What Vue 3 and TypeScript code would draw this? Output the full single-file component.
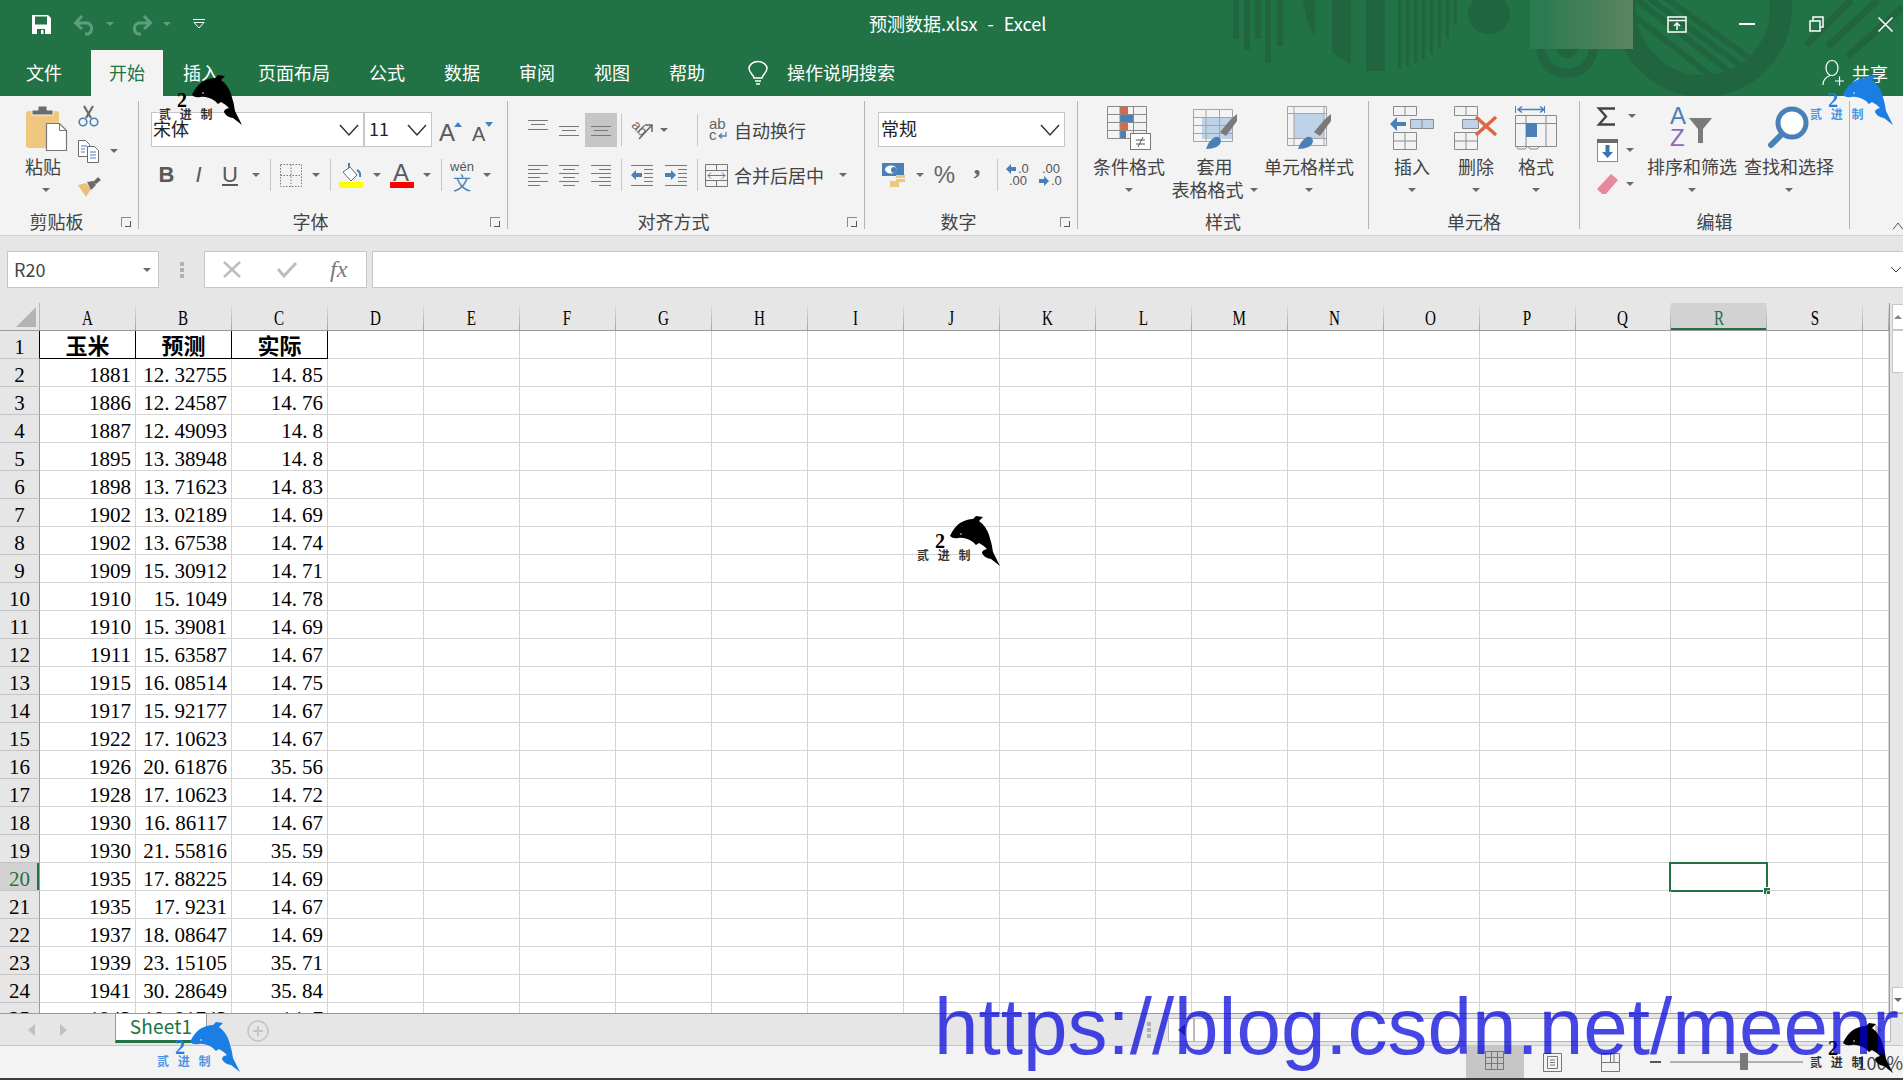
<script setup lang="ts">
interface Mark { x: number; y: number; color: string }

const BLUE = '#1b7ee5'
const marks: Mark[] = [
  { x: 917, y: 516, color: '#000' },
  { x: 159, y: 75, color: '#000' },
  { x: 1810, y: 75, color: BLUE },
  { x: 157, y: 1022, color: BLUE },
  { x: 1810, y: 1023, color: '#000' },
]

const tabs = ['页面布局', '公式', '数据', '审阅', '视图', '帮助']
const columns = 'ABCDEFGHIJKLMNOPQRS'.split('').concat('')

const data: [string, string, string][] = [
  ['1881', '12.32755', '14.85'], ['1886', '12.24587', '14.76'], ['1887', '12.49093', '14.8'],
  ['1895', '13.38948', '14.8'], ['1898', '13.71623', '14.83'], ['1902', '13.02189', '14.69'],
  ['1902', '13.67538', '14.74'], ['1909', '15.30912', '14.71'], ['1910', '15.1049', '14.78'],
  ['1910', '15.39081', '14.69'], ['1911', '15.63587', '14.67'], ['1915', '16.08514', '14.75'],
  ['1917', '15.92177', '14.67'], ['1922', '17.10623', '14.67'], ['1926', '20.61876', '35.56'],
  ['1928', '17.10623', '14.72'], ['1930', '16.86117', '14.67'], ['1930', '21.55816', '35.59'],
  ['1935', '17.88225', '14.69'], ['1935', '17.9231', '14.67'], ['1937', '18.08647', '14.69'],
  ['1939', '23.15105', '35.71'], ['1941', '30.28649', '35.84'], ['1943', '18.91743', '14.7'],
]

const heads = ['玉米', '预测', '实际']
const sheetRows = [heads as string[]].concat(data).map((vals, i) => ({
  n: i + 1,
  cells: columns.map((c, j) => {
    const [int, frac] = (vals[j] ?? '').split('.')
    return { c, int, frac, selected: c === 'R' && i === 19 }
  }),
}))

const bars = [
  [1233, 39], [1244, 50], [1255, 39], [1265, 63], [1277, 46],
  [1398, 69], [1406, 67], [1414, 63], [1422, 59], [1430, 54], [1438, 47], [1446, 38], [1454, 24],
]
</script>

<template>
  <div class="app">
    <div class="top">
      <!-- title bar artwork -->
      <svg class="decor" width="1903" height="96" viewBox="0 0 1903 96">
        <defs>
          <linearGradient id="patch" x1="0" x2="1" y1="0" y2="0">
            <stop offset="0.1" stop-color="#2c7a50" />
            <stop offset="1" stop-color="#5c8560" />
          </linearGradient>
          <clipPath id="ringin"><circle cx="1703" cy="8" r="67" /></clipPath>
        </defs>
        <g fill="#21653f">
          <rect v-for="b in bars" :key="b[0]" :x="b[0]" y="0" :width="b[0] < 1300 ? 6 : 3" :height="b[1]" />
          <path d="M1303 0h12v37q-9-15-12-37z" />
          <path d="M1332 0h19v65l-19-13z" />
          <path d="M1366 0h19v71h-19z" />
          <ellipse cx="1489" cy="14" rx="21" ry="20" />
          <circle cx="1567" cy="47" r="31" />
        </g>
        <circle cx="1567" cy="47" r="22" fill="#217346" />
        <circle cx="1567" cy="47" r="11" fill="#21653f" />
        <circle cx="1703" cy="8" r="78" fill="none" stroke="#21653f" stroke-width="22" />
        <g clip-path="url(#ringin)" stroke="#21653f" stroke-width="6">
          <path d="M1632 -4L1740 80M1622 6L1726 88M1646 -4L1752 74M1660 -6L1766 70" />
        </g>
        <path d="M1806 45L1851 0M1827 47L1878 0M1847 57L1903 7" stroke="#21653f" stroke-width="7" />
        <rect x="1530" y="0" width="103" height="49" fill="url(#patch)" />
      </svg>

      <div class="titlebar">
        <div class="qat">
          <svg class="q-save" width="19" height="19" viewBox="0 0 19 19">
            <path fill="#fff" d="M0 0h16l3 3v16H0z" />
            <path fill="#217346" d="M3 1.5h12v8H3zM5 14h8v5H5z" />
            <path fill="#fff" d="M9 15h2.5v4H9z" />
          </svg>
          <svg class="q-undo" width="23" height="21" viewBox="0 0 23 21" fill="none" stroke="#5f9d7b" stroke-width="3">
            <path d="M4 9h11a6 6 0 0 1 0 11h-3M9 2L2.500 9l6.500 6" />
          </svg>
          <i class="caret dim q-gap" />
          <svg class="q-redo" width="23" height="21" viewBox="0 0 23 21" fill="none" stroke="#5f9d7b" stroke-width="3">
            <path d="M19 9H8a6 6 0 0 0 0 11h3M14 2l6.500 7-6.500 6" />
          </svg>
          <i class="caret dim q-gap2" />
          <svg width="12" height="10" viewBox="0 0 12 10" fill="none" stroke="#fff">
            <path d="M0 .5h12M1 3.500l5 5.500 5-5.500z" />
          </svg>
        </div>
        <div class="doc-title">预测数据.xlsx&nbsp; - &nbsp;Excel</div>
        <div class="win">
          <svg width="20" height="17" viewBox="0 0 20 17" fill="none" stroke="#fff" stroke-width="1.500">
            <path d="M1 1h18v15H1zM1 4.500h18M10 14V7M7 10l3-3 3 3" />
          </svg>
          <svg class="w-min" width="16" height="2" viewBox="0 0 16 2"><path d="M0 0h16v2H0z" fill="#fff" /></svg>
          <svg class="w-max" width="15" height="16" viewBox="0 0 15 16" fill="none" stroke="#fff" stroke-width="1.500">
            <path d="M1 5h10v10H1zM4 5V1h10v10h-3" />
          </svg>
          <svg class="w-max" width="15" height="15" viewBox="0 0 15 15" fill="none" stroke="#fff" stroke-width="1.500">
            <path d="M.5.500l14 14M14.500.500l-14 14" />
          </svg>
        </div>
      </div>

      <nav class="tabs">
        <span class="tab first">文件</span>
        <span class="tab active">开始</span>
        <span class="tab">插入</span>
        <span v-for="t in tabs" :key="t" class="tab">{{ t }}</span>
        <svg class="bulb" width="20" height="24" viewBox="0 0 20 24" fill="none" stroke="#fff" stroke-width="1.500">
          <path d="M6 17c0-3-5-5-5-9.500a9 7 0 0 1 18 0C19 12 14 14 14 17zM7 20h6M8 23h4" />
        </svg>
        <span class="tell">操作说明搜索</span>
        <div class="share">
          <svg width="22" height="26" viewBox="0 0 22 26" fill="none" stroke="#fff" stroke-width="1.200">
            <ellipse cx="10" cy="8" rx="6" ry="7.500" />
            <path d="M1 25c0-5 3-8 7-9.500M13 21h9M17.500 16.500v9" />
          </svg>
          <span>共享</span>
        </div>
      </nav>
    </div>

    <section class="ribbon">
      <!-- clipboard -->
      <div class="group g-clip">
        <div class="gbody">
          <div class="big paste">
            <div class="big-ico">
              <svg width="41" height="45" viewBox="0 0 41 45">
                <rect x="0" y="5" width="33" height="37" rx="3" fill="#efc77f" />
                <path d="M6 9V4h6V0h9v4h6v5z" fill="#6b6b6b" stroke="#f3f3f3" />
                <path d="M20.500 17.500h13l7 7v20h-20z" fill="#fff" stroke="#777" stroke-width="1.200" />
                <path d="M33.500 17.500v7h7" fill="none" stroke="#777" />
              </svg>
            </div>
            <div class="big-txt">粘贴</div>
            <div class="big-txt"><i class="caret c-paste" /></div>
          </div>
          <div class="smalls s-clip">
            <div class="small-row">
              <svg width="21" height="21" viewBox="0 0 21 21" fill="none">
                <path d="M6 0l7 12M15 0L8 12" stroke="#6b6b6b" stroke-width="2.200" />
                <circle cx="5" cy="16" r="3.800" stroke="#4a80b8" stroke-width="1.600" />
                <circle cx="16" cy="16" r="3.800" stroke="#4a80b8" stroke-width="1.600" />
              </svg>
            </div>
            <div class="small-row">
              <svg width="21" height="23" viewBox="0 0 21 23" fill="#fff" stroke="#6b6b6b">
                <path d="M.5.500h7l4 4v12H.500z" />
                <path d="M9.500 6.500h7l4 4v12h-11z" />
                <path d="M3 6h6M3 9h4M3 12h4M12 12h6M12 15h6M12 18h6" stroke="#4a80b8" />
              </svg>
              <i class="caret c-copy" />
            </div>
            <div class="small-row">
              <svg width="24" height="21" viewBox="0 0 24 21">
                <path d="M0 9l8-2 5 6-5 8z" fill="#eac07d" />
                <path d="M9 6l6-1 3 4-5 5zM15 6l5-5 3 3-5 4z" fill="#6b6b6b" />
              </svg>
            </div>
          </div>
        </div>
        <div class="glabel"><span>剪贴板</span><i class="launcher" /></div>
      </div>

      <!-- font -->
      <div class="group g-font">
        <div class="gbody col">
          <div class="row1">
            <div class="select w-font"><span>宋体</span>
              <svg class="chev" width="20" height="12" viewBox="0 0 20 12" fill="none" stroke="#333" stroke-width="1.500"><path d="M1 1l9 10 9-10" /></svg>
            </div>
            <div class="select w-size"><span>11</span>
              <svg class="chev" width="20" height="12" viewBox="0 0 20 12" fill="none" stroke="#333" stroke-width="1.500"><path d="M1 1l9 10 9-10" /></svg>
            </div>
            <svg class="grow" width="24" height="28" viewBox="0 0 24 28">
              <text x="0" y="25" class="sz-a">A</text>
              <path d="M15 11l4-5 4 5z" fill="#4a80b8" />
            </svg>
            <svg class="shrink" width="22" height="28" viewBox="0 0 22 28">
              <text x="0" y="25" class="sz-b">A</text>
              <path d="M13 6h8l-4 5z" fill="#4a80b8" />
            </svg>
          </div>
          <div class="row2 r-font">
            <b class="t-b">B</b>
            <i class="t-i">I</i>
            <u class="t-u">U</u>
            <i class="caret" />
            <i class="sep" />
            <svg width="22" height="23" viewBox="0 0 22 23" fill="none" stroke="#777" stroke-dasharray="1.500 1.500">
              <path d="M.5.500h21v22H.500zM11 .5v22M.5 11.500h21" />
            </svg>
            <i class="caret" />
            <i class="sep" />
            <svg width="24" height="26" viewBox="0 0 24 26">
              <path d="M4 10l7-5 7 8-6 6z" fill="#fff" stroke="#6b6b6b" />
              <path d="M10 6V1M18 8q4 2 3 7" fill="none" stroke="#4a80b8" stroke-width="2" />
              <rect y="20" width="24" height="6" fill="#ff0" />
            </svg>
            <i class="caret" />
            <svg width="24" height="26" viewBox="0 0 24 26">
              <text x="3" y="19" class="sz-c">A</text>
              <rect y="20" width="24" height="6" fill="#f00" />
            </svg>
            <i class="caret" />
            <i class="sep" />
            <div class="wen"><span>wén</span><em>文</em></div>
            <i class="caret" />
          </div>
        </div>
        <div class="glabel"><span>字体</span><i class="launcher" /></div>
      </div>

      <!-- alignment -->
      <div class="group g-align">
        <div class="gbody col">
          <div class="row2 r-a1">
            <svg width="20" height="30" viewBox="0 0 20 30" stroke="#777"><path d="M0 5.500h20M3 9.500h14M0 14.500h20" /></svg>
            <svg width="20" height="30" viewBox="0 0 20 30" stroke="#777"><path d="M0 11.500h20M3 15.500h14M0 20.500h20" /></svg>
            <div class="on"><svg width="20" height="30" viewBox="0 0 20 30" stroke="#777"><path d="M0 17.500h20M3 21.500h14M0 26.500h20" /></svg></div>
            <i class="sep" />
            <svg width="22" height="20" viewBox="0 0 22 20" fill="none" stroke="#666" stroke-width="1.500">
              <path d="M8 19L20 6M14 5h7v7" />
              <text x="0" y="11" class="ab45" transform="rotate(45 6 8)">ab</text>
            </svg>
            <i class="caret c-orient" />
            <i class="sep" />
            <div class="wide">
              <svg width="24" height="22" viewBox="0 0 24 22">
                <text x="4" y="10" class="ab">ab</text>
                <text x="4" y="21" class="ab">c</text>
                <path d="M21 13v4h-7M17 14.500L14 17l3 2.500" fill="none" stroke="#4a80b8" stroke-width="1.300" />
              </svg>
              <span>自动换行</span>
            </div>
          </div>
          <div class="row2 r-a2">
            <svg width="20" height="22" viewBox="0 0 20 22" stroke="#777"><path d="M0 1.500h20M0 5.500h12M0 9.500h20M0 13.500h12M0 17.500h20M0 21.500h12" /></svg>
            <svg width="20" height="22" viewBox="0 0 20 22" stroke="#777"><path d="M0 1.500h20M4 5.500h12M0 9.500h20M4 13.500h12M0 17.500h20M4 21.500h12" /></svg>
            <svg width="20" height="22" viewBox="0 0 20 22" stroke="#777"><path d="M0 1.500h20M8 5.500h12M0 9.500h20M8 13.500h12M0 17.500h20M8 21.500h12" /></svg>
            <i class="sep" />
            <svg width="22" height="22" viewBox="0 0 22 22">
              <path d="M0 1.500h22M13 5.500h9M13 9.500h9M13 13.500h9M13 17.500h9M0 21.500h22" stroke="#777" />
              <path d="M0 11l5-5v3h6v4H5v3z" fill="#4a80b8" />
            </svg>
            <svg width="22" height="22" viewBox="0 0 22 22">
              <path d="M0 1.500h22M13 5.500h9M13 9.500h9M13 13.500h9M13 17.500h9M0 21.500h22" stroke="#777" />
              <path d="M11 11L6 6v3H0v4h6v3z" fill="#4a80b8" />
            </svg>
            <i class="sep" />
            <div class="wide">
              <svg width="24" height="23" viewBox="0 0 24 23" fill="none" stroke="#777">
                <path d="M.5.500h22v22H.500zM.5 6.500h22M.5 16.500h22M11.500.5v6M11.500 16.500v6" />
                <path d="M3 11.500h17M6 8.500l-3 3 3 3M17 8.500l3 3-3 3" stroke="#4a80b8" />
              </svg>
              <span>合并后居中</span>
              <i class="caret c-merge" />
            </div>
          </div>
        </div>
        <div class="glabel"><span>对齐方式</span><i class="launcher" /></div>
      </div>

      <!-- number -->
      <div class="group g-num">
        <div class="gbody col">
          <div class="row1">
            <div class="select w-num"><span>常规</span>
              <svg class="chev" width="20" height="12" viewBox="0 0 20 12" fill="none" stroke="#333" stroke-width="1.500"><path d="M1 1l9 10 9-10" /></svg>
            </div>
          </div>
          <div class="row2 r-num">
            <svg width="24" height="24" viewBox="0 0 24 24">
              <rect width="22" height="13" fill="#4a80b8" />
              <ellipse cx="9" cy="6.500" rx="6" ry="4" fill="#fff" />
              <circle cx="12" cy="7" r="3" fill="#4a80b8" />
              <path d="M14 12h9v3h-9zM14 16h9v3h-9zM8 18h9v3H8zM8 21h9v3H8z" fill="#efc77f" />
            </svg>
            <i class="caret" />
            <span class="pct">%</span>
            <span class="comma">,</span>
            <i class="sep" />
            <svg width="24" height="24" viewBox="0 0 24 24">
              <path d="M0 6l5-5v3h5v4H5v3z" fill="#4a80b8" />
              <text x="12" y="10" class="dec">.0</text>
              <text x="3" y="22" class="dec">.00</text>
            </svg>
            <svg width="24" height="24" viewBox="0 0 24 24">
              <text x="3" y="10" class="dec">.00</text>
              <path d="M10 18l-5-5v3H0v4h5v3z" fill="#4a80b8" />
              <text x="12" y="22" class="dec">.0</text>
            </svg>
          </div>
        </div>
        <div class="glabel"><span>数字</span><i class="launcher" /></div>
      </div>

      <!-- styles -->
      <div class="group g-style">
        <div class="gbody">
          <div class="big b-cond">
            <div class="big-ico">
              <svg width="44" height="44" viewBox="0 0 44 44">
                <path d="M13 1h8v8h-8zM13 17h8v8h-8z" fill="#dc6744" />
                <path d="M13 9h14v8H13zM13 25h6v8h-6z" fill="#4a80b8" />
                <path d="M.5.500h39v32H.500zM.5 8.500h39M.5 16.500h39M.5 24.500h39M13 .5v32M26.500.5v32" fill="none" stroke="#8a8a8a" />
                <rect x="23.500" y="27.500" width="20" height="16" fill="#fff" stroke="#777" />
                <path d="M29 34h9M29 38h9M36 31l-5 10" stroke="#555" fill="none" />
              </svg>
            </div>
            <div class="big-txt">条件格式</div>
            <div class="big-txt"><i class="caret" /></div>
          </div>
          <div class="big b-table">
            <div class="big-ico">
              <svg width="44" height="45" viewBox="0 0 44 45">
                <path d="M9 11h30v22H9z" fill="#bed3e8" />
                <path d="M.5 3.500h39v32H.500zM.5 11.500h39M.5 19.500h39M.5 27.500h39M13 3.500v32M26.500 3.500v32" fill="none" stroke="#a4a4a4" />
                <path d="M27 26l11-13 6-5v7l-11 15z" fill="#7a7a7a" />
                <path d="M13 43q3-9 9-12 6-1 6 5-2 7-15 7z" fill="#4a80b8" />
              </svg>
            </div>
            <div class="big-txt">套用</div>
            <div class="big-txt nowrap">表格格式<i class="caret c-in" /></div>
          </div>
          <div class="big b-cell">
            <div class="big-ico">
              <svg width="44" height="45" viewBox="0 0 44 45">
                <path d="M7 8h30v24H7z" fill="#bed3e8" />
                <path d="M.5.500h39v39H.500zM.5 7.500h39M.5 32.500h39M7 .5v39M37 .5v39" fill="none" stroke="#a4a4a4" />
                <path d="M27 26l11-13 6-5v7l-11 15z" fill="#7a7a7a" />
                <path d="M11 43q3-9 9-12 6-1 6 5-2 7-15 7z" fill="#4a80b8" />
              </svg>
            </div>
            <div class="big-txt nowrap">单元格样式</div>
            <div class="big-txt"><i class="caret" /></div>
          </div>
        </div>
        <div class="glabel"><span>样式</span></div>
      </div>

      <!-- cells -->
      <div class="group g-cells">
        <div class="gbody">
          <div class="big">
            <div class="big-ico">
              <svg width="44" height="44" viewBox="0 0 44 44">
                <path d="M3.500.5h23v9h-23zM15 .5v9M3.500 26.500h23v17h-23zM15 26.500v17M3.500 35h23" fill="none" stroke="#8a8a8a" />
                <path d="M20.500 13.500h23v9h-23z" fill="#bed3e8" stroke="#8a8a8a" />
                <path d="M32 13.500v9" stroke="#8a8a8a" />
                <path d="M0 18l7-7v5h9v4H7v5z" fill="#4a80b8" />
              </svg>
            </div>
            <div class="big-txt">插入</div>
            <div class="big-txt"><i class="caret" /></div>
          </div>
          <div class="big b-del">
            <div class="big-ico">
              <svg width="44" height="44" viewBox="0 0 44 44">
                <path d="M.5.500h23v9H.500zM12 .5v9M.5 26.500h23v17H.500zM12 26.500v17M.5 35h23" fill="none" stroke="#8a8a8a" />
                <path d="M8.500 13.500h16v9h-16z" fill="#bed3e8" stroke="#8a8a8a" />
                <path d="M22 11l20 18M42 11L22 29" stroke="#dc6744" stroke-width="3.500" />
              </svg>
            </div>
            <div class="big-txt">删除</div>
            <div class="big-txt"><i class="caret" /></div>
          </div>
          <div class="big b-fmt">
            <div class="big-ico">
              <svg width="42" height="44" viewBox="0 0 42 44">
                <path d="M3 3.500h26M7 .5l-4 3 4 3M25 .5l4 3-4 3" fill="none" stroke="#4a80b8" stroke-width="1.500" />
                <path d="M.5 0v7M29.500 0v7" stroke="#4a80b8" />
                <path d="M.5 9.500h41v31H.500zM.5 17.500h41M11 9.500v31M31 9.500v31" fill="none" stroke="#8a8a8a" />
                <rect x="11" y="17" width="11" height="14" fill="#4a80b8" />
                <path d="M1 40l2 3h7l3-3M13 40l2 3h7l3-3" fill="none" stroke="#8a8a8a" />
              </svg>
            </div>
            <div class="big-txt">格式</div>
            <div class="big-txt"><i class="caret" /></div>
          </div>
        </div>
        <div class="glabel"><span>单元格</span></div>
      </div>

      <!-- editing -->
      <div class="group g-edit">
        <div class="gbody">
          <div class="smalls s-edit">
            <div class="small-row">
              <svg width="18" height="19" viewBox="0 0 18 19" fill="none" stroke="#444" stroke-width="2.400"><path d="M18 1.500H2L9 9.500l-7 8h16" /></svg>
              <i class="caret c-sum" />
            </div>
            <div class="small-row">
              <svg width="21" height="23" viewBox="0 0 21 23">
                <rect x=".5" y=".5" width="20" height="22" fill="#fff" stroke="#8a8a8a" />
                <rect width="21" height="4" fill="#6b6b6b" />
                <path d="M8.500 6h4v7h3.500l-5.500 6-5.500-6h3.500z" fill="#3b75b0" />
              </svg>
              <i class="caret c-fill" />
            </div>
            <div class="small-row">
              <svg width="21" height="22" viewBox="0 0 21 22">
                <path d="M0 16L14 1l7 6L9 21H5z" fill="#e8899b" />
              </svg>
              <i class="caret c-fill" />
            </div>
          </div>
          <div class="big w90">
            <div class="big-ico">
              <svg width="44" height="44" viewBox="0 0 44 44">
                <text x="0" y="18" class="az-a">A</text>
                <text x="0" y="40" class="az-z">Z</text>
                <path d="M19 12h23l-9 11v14h-5V23z" fill="#7a7a7a" />
              </svg>
            </div>
            <div class="big-txt nowrap">排序和筛选</div>
            <div class="big-txt"><i class="caret" /></div>
          </div>
          <div class="big w90">
            <div class="big-ico">
              <svg width="42" height="44" viewBox="0 0 42 44" fill="none">
                <circle cx="24" cy="17" r="14" stroke="#4a80b8" stroke-width="5" fill="#fff" />
                <path d="M13 29L3 39" stroke="#4a80b8" stroke-width="6" stroke-linecap="round" />
              </svg>
            </div>
            <div class="big-txt nowrap">查找和选择</div>
            <div class="big-txt"><i class="caret" /></div>
          </div>
        </div>
        <div class="glabel"><span>编辑</span></div>
      </div>
      <svg class="collapse" width="10" height="8" viewBox="0 0 10 8" fill="none" stroke="#555"><path d="M0 7.500L5 1l5 6.500" /></svg>
    </section>

    <div class="formula">
      <div class="namebox"><span>R20</span><i class="caret" /></div>
      <div class="fdots"><i /><i /><i /></div>
      <div class="fbtns">
        <svg width="18" height="17" viewBox="0 0 18 17" stroke="#bdbdbd" stroke-width="2.500"><path d="M1 1l16 15M17 1L1 16" /></svg>
        <svg width="20" height="17" viewBox="0 0 20 17" fill="none" stroke="#bdbdbd" stroke-width="3"><path d="M1 8l6 7L19 2" /></svg>
        <span class="fx">fx</span>
      </div>
      <div class="finput">
        <svg width="12" height="7" viewBox="0 0 12 7" fill="none" stroke="#444"><path d="M1 1l5 5 5-5" /></svg>
      </div>
    </div>

    <div class="work">
      <div class="sheet">
        <div class="grid-row col-head">
          <div class="corner"><i /></div>
          <div v-for="c in columns" :key="c" class="ch" :class="{ cur: c === 'R' }"><span>{{ c }}</span></div>
        </div>
        <div v-for="r in sheetRows" :key="r.n" class="grid-row" :class="{ 'first-row': r.n === 1 }">
          <div class="rh" :class="{ cur: r.n === 20 }">{{ r.n }}</div>
          <div
            v-for="(cell, j) in r.cells"
            :key="j"
            class="cell"
            :class="{ head: r.n === 1 && j < 3, selected: cell.selected }"
          >
            <template v-if="r.n === 1">{{ cell.int }}</template>
            <template v-else>{{ cell.int }}<span v-if="cell.frac" class="pt">.</span>{{ cell.frac }}</template>
          </div>
        </div>
      </div>
      <div class="vscroll">
        <div class="vbtn"><i class="tri-up" /></div>
        <div class="vthumb" />
        <div class="vtrack" />
        <div class="vbtn"><i class="caret" /></div>
      </div>
    </div>

    <div class="sheetbar">
      <div class="nav">
        <i class="tri-l" />
        <i class="tri-r" />
      </div>
      <div class="stab">Sheet1</div>
      <svg class="plus" width="22" height="22" viewBox="0 0 22 22" fill="none" stroke="#c4c4c4" stroke-width="1.500">
        <circle cx="11" cy="11" r="10" /><path d="M11 6v10M6 11h10" stroke-width="2" />
      </svg>
      <div class="hdots"><i /><i /><i /></div>
      <div class="hscroll">
        <div class="hbtn"><i class="tri-l dark" /></div>
        <div class="hthumb" />
        <div class="hbtn right"><i class="tri-r" /></div>
      </div>
    </div>

    <footer class="status">
      <div class="view on">
        <svg width="19" height="19" viewBox="0 0 19 19" fill="none" stroke="#777"><path d="M.5.500h18v18H.500zM6.500.5v18M12.500.5v18M.5 6.500h18M.5 12.500h18" /></svg>
      </div>
      <div class="view">
        <svg width="19" height="19" viewBox="0 0 19 19" fill="none" stroke="#777"><path d="M.5.500h18v18H.500zM4.500 3.500h10v12h-10zM7 7h5M7 9.500h5M7 12h5" /></svg>
      </div>
      <div class="view">
        <svg width="19" height="19" viewBox="0 0 19 19" fill="none" stroke="#777"><path d="M.5.500h18v18H.500zM.5 9.500h18M9.500.5v9M13 .5v9" /></svg>
      </div>
      <i class="minus" />
      <div class="slider"><i /></div>
      <span class="zoomv">100%</span>
    </footer>
    <div class="edge" />

    <!-- watermarks -->
    <svg
      v-for="m in marks"
      :key="m.x + m.y"
      class="mark"
      width="84"
      height="52"
      viewBox="0 0 84 52"
      :style="{ left: m.x + 'px', top: m.y + 'px', color: m.color }"
    >
      <path
        fill="currentColor"
        d="M33 20Q37 11 43 7 50 3 56 3L59 0 66 1 62 5Q69 10 72 19 75 28 76 36L83 50 74 43Q67 42 65 37 65 34 70 33 66 29 62 27L59 29 56 26Q48 21 41 22 36 23 33 20z"
      />
      <circle cx="44" cy="18" r=".8" fill="#fff" />
      <text x="18" y="32" class="m-two" fill="currentColor">2</text>
      <text x="0" y="44" class="m-cap" fill="currentColor">贰 进 制</text>
    </svg>
    <div class="url">https://blog.csdn.net/meenr</div>
  </div>
</template>

<style>
html, body { margin: 0; background: #fff; overflow: hidden; }
</style>

<style scoped>
.app {
  width: 1903px;
  height: 1080px;
  position: relative;
  overflow: hidden;
  font-family: "Noto Sans CJK SC", "Noto Sans", sans-serif;
  font-size: 18px;
  color: #444;
  background: #f3f3f3;
}
i { font-style: normal; display: block; }
svg { display: block; flex: none; overflow: visible; }

.caret {
  width: 0;
  height: 0;
  border-left: 4px solid transparent;
  border-right: 4px solid transparent;
  border-top: 4px solid #6a6a6a;
  flex: none;
}
.caret.dim { border-top-color: #5f9d7b; }

/* ---- top ---- */
.top { position: relative; height: 96px; background: #217346; color: #fff; }
.decor { position: absolute; left: 0; top: 0; }
.titlebar { position: relative; height: 48px; display: flex; align-items: center; margin-bottom: 3px; }
.qat { width: 869px; box-sizing: border-box; padding-left: 32px; display: flex; align-items: center; }
.q-save { margin-right: 22px; }
.q-gap { margin: 0 16px 0 10px; }
.q-gap2 { margin: 0 22px 0 10px; }
.doc-title { line-height: 40px; margin-bottom: 3px; white-space: nowrap; word-spacing: 1px; }
.win { margin-left: auto; padding-right: 10px; display: flex; align-items: center; }
.w-min { margin-left: 52px; }
.w-max { margin-left: 54px; }

.tabs { position: relative; height: 45px; display: flex; gap: 3px; padding-left: 8px; align-items: stretch; margin-top: -1px; }
.tab { padding: 0 18px; line-height: 45px; white-space: nowrap; }
.tab.first { margin-right: 8px; }
.tab.active { background: #f3f3f3; color: #217346; padding: 0 18px; margin-right: -1px; height: 46px; }
.bulb { margin: 11px 0 0 22px; }
.tell { margin-left: 16px; line-height: 45px; }
.share { margin-left: auto; padding-right: 15px; display: flex; align-items: center; gap: 8px; }

/* ---- ribbon ---- */
.ribbon {
  position: relative;
  height: 140px;
  box-sizing: border-box;
  padding-top: 5px;
  border-bottom: 1px solid #d2d2d2;
  display: flex;
  align-items: flex-start;
  background: #f3f3f3;
}
.group {
  height: 128px;
  box-sizing: border-box;
  border-right: 1px solid #b5b5b5;
  display: flex;
  flex-direction: column;
}
.g-clip { width: 139px; }
.g-font { width: 369px; }
.g-align { width: 357px; }
.g-num { width: 213px; }
.g-style { width: 291px; }
.g-cells { width: 211px; }
.g-edit { width: 270px; }

.gbody { height: 108px; display: flex; flex: none; }
.gbody.col { flex-direction: column; }
.glabel { display: flex; height: 20px; line-height: 24px; text-align: center; align-items: flex-start; }
.glabel span { flex: 1; }
.launcher {
  width: 10px;
  height: 10px;
  margin: 8px 7px 0 8px;
  box-sizing: border-box;
  border-left: 1px solid #8a8a8a;
  border-top: 1px solid #8a8a8a;
  background: linear-gradient(45deg, #555 0 0) no-repeat 100% 100% / 6px 1px,
    linear-gradient(90deg, #555 0 0) no-repeat 100% 100% / 1px 6px;
}

.big { display: flex; flex-direction: column; align-items: center; padding-top: 5px; }
.big-ico { height: 46px; margin-bottom: 3px; display: flex; align-items: flex-start; }
.big-txt { height: 23px; line-height: 23px; display: flex; align-items: center; justify-content: center; }
.nowrap { white-space: nowrap; }
.c-in { margin-left: 6px; }

.g-clip .gbody { padding-left: 26px; }
.paste { width: 41px; align-items: flex-start; }
.paste .big-txt { margin-left: -1px; }
.c-paste { margin-left: 17px; }
.s-clip { margin: -2.500px 0 0 11px; }
.small-row { height: 35px; display: flex; align-items: center; }
.c-copy { margin-left: 11px; margin-top: 0; }
.s-edit { width: 50px; margin-top: -2px; margin-right: -7px; flex: none; }
.s-edit .small-row { height: 34px; }
.c-sum { margin-left: 13px; }
.c-fill { margin-left: 8px; }

.row1 { display: flex; align-items: center; height: 35px; margin-top: 11px; flex: none; }
.g-font .row1 { padding-left: 12px; }
.g-num .row1 { padding-left: 13px; }
.select {
  height: 35px;
  box-sizing: border-box;
  background: #fff;
  border: 1px solid #c6c6c6;
  display: flex;
  align-items: center;
  justify-content: space-between;
  padding: 0 3px 0 1px;
  color: #222;
}
.select span { margin-bottom: 3px; }
.w-font { width: 213px; }
.w-size { width: 68px; padding-left: 4px; margin-left: 0; }
.w-num { width: 187px; padding-left: 2px; }
.chev { margin-right: 1px; }
.grow { margin-left: 7px; }
.shrink { margin-left: 9px; }
.sz-a { font: 24px "Liberation Sans", sans-serif; fill: #595959; }
.sz-b { font: 20px "Liberation Sans", sans-serif; fill: #595959; }
.sz-c { font: 24px "Liberation Sans", sans-serif; fill: #595959; }

.row2 { display: grid; height: 36px; margin-top: 10px; place-items: center; flex: none; }
.sep { width: 1px; height: 32px; background: #c6c6c6; }
.r-font { padding-left: 11px; grid-template-columns: 33px 31px 32px 20px 8px 33px 18px 10px 32px 20px 30px 20px 8px 34px 16px; }
.t-b, .t-i, .t-u { font: 22px "Liberation Sans", sans-serif; color: #595959; }
.t-b { font-weight: 700; }
.t-i { font-style: italic; }
.wen { display: flex; flex-direction: column; align-items: center; line-height: 1; }
.wen span { font: 13px/13px "Liberation Sans", sans-serif; color: #555; }
.wen em { font-style: normal; font-size: 18px; line-height: 18px; color: #4a80b8; }

.g-align .row2:first-child { height: 34px; margin-top: 12px; }
.r-a1, .r-a2 { padding-left: 14px; }
.r-a1 { grid-template-columns: 31px 32px 32px 8px 34px 34px 8px 164px; }
.r-a2 { grid-template-columns: 31px 32px 32px 8px 33px 35px 8px 164px; }
.on { width: 32px; height: 34px; background: #c6c6c6; display: flex; justify-content: center; }
.on svg { margin-top: -4px; }
.c-orient { justify-self: start; margin-left: 1px; }
.wide { justify-self: start; display: flex; align-items: center; padding-left: 4px; gap: 5px; white-space: nowrap; }
.wide span { margin-bottom: 1px; }
.c-merge { margin-left: 10px; }
.ab { font: 15px "Liberation Sans", sans-serif; fill: #666; stroke: none; }
.ab45 { font: 14px "Liberation Sans", sans-serif; fill: #666; stroke: none; }

.r-num { padding-left: 13px; grid-template-columns: 31px 21px 29px 36px 4px 38px 28px; }
.pct { font: 24px "Liberation Sans", sans-serif; color: #666; }
.comma { font: 700 28px/24px "Liberation Serif", serif; color: #666; margin-top: -20px; }
.dec { font: 13px "Liberation Sans", sans-serif; fill: #555; }

.g-style .gbody { padding-left: 15px; gap: 7px; }
.b-cond { width: 72px; }
.b-table { width: 85px; }
.b-cell { width: 90px; }
.g-cells .gbody { padding-left: 21px; }
.g-cells .big { width: 44px; }
.b-del { margin-left: 20px; }
.b-fmt { margin-left: 16px; }
.g-edit .gbody { padding-left: 17px; gap: 7px; }
.w90 { width: 90px; }
.az-a { font: 24px "Liberation Sans", sans-serif; fill: #4a80b8; }
.az-z { font: 24px "Liberation Sans", sans-serif; fill: #9266b8; }
.collapse { position: absolute; right: 0; top: 126px; }

/* ---- formula bar ---- */
.formula {
  height: 67px;
  box-sizing: border-box;
  padding: 15px 0 0 7px;
  background: #e6e6e6;
  display: flex;
  align-items: flex-start;
}
.namebox, .fbtns, .finput {
  height: 37px;
  box-sizing: border-box;
  background: #fff;
  border: 1px solid #c6c6c6;
  display: flex;
  align-items: center;
}
.namebox { width: 152px; padding: 0 7px 0 6px; justify-content: space-between; color: #444; }
.namebox span { margin-bottom: 2px; }
.fdots { width: 45px; height: 37px; display: flex; flex-direction: column; align-items: center; justify-content: center; gap: 2px; }
.fdots i { width: 4px; height: 4px; background: #b0b0b0; }
.fbtns { width: 163px; padding-left: 18px; }
.fbtns svg:nth-child(2) { margin-left: 36px; }
.fx { margin-left: 33px; font: italic 400 24px "Liberation Serif", serif; color: #7a7a7a; }
.finput { flex: 1; margin-left: 5px; justify-content: flex-end; padding-right: 1px; border-right: 0; }

/* ---- sheet ---- */
.work { height: 710px; display: flex; background: #fff; }
.sheet { width: 1890px; height: 710px; overflow: hidden; border-right: 1px solid #9a9a9a; box-sizing: border-box; }
.grid-row {
  display: grid;
  grid-template-columns: 40px repeat(19, 95.97px) 1fr;
  grid-template-rows: 28px;
  height: 28px;
  font: 21px/28px "Liberation Serif", "Noto Sans CJK SC", serif;
  color: #000;
}
.col-head { background: #e6e6e6; border-bottom: 1px solid #9a9a9a; box-sizing: content-box; height: 27px; grid-template-rows: 27px; }
.corner { position: relative; border-right: 1px solid #b5b5b5; box-sizing: border-box; }
.corner i {
  position: absolute;
  left: 16px;
  top: 4px;
  width: 0;
  height: 0;
  border-left: 20px solid transparent;
  border-bottom: 20px solid #b4b4b4;
}
.ch {
  box-sizing: border-box;
  text-align: center;
  padding-top: 1px;
  border-right: 1px solid;
  border-image: linear-gradient(#e6e6e6, #a0a0a0) 1;
  overflow: hidden;
}
.ch span { display: inline-block; transform: scaleX(.72); }
.ch.cur { background: #d2d2d2; color: #217346; box-shadow: inset 0 -2px #217346; }
.rh {
  background: #e6e6e6;
  box-sizing: border-box;
  border-right: 1px solid #9a9a9a;
  border-bottom: 1px solid #c4c4c4;
  padding-top: 2px;
  text-align: center;
}
.rh.cur { background: #d2d2d2; color: #217346; box-shadow: inset -2px 0 #217346; }
.first-row .rh { border-right-color: #000; }
.cell {
  position: relative;
  box-sizing: border-box;
  border-right: 1px solid #d4d4d4;
  border-bottom: 1px solid #d4d4d4;
  padding: 2px 4px 0 0;
  text-align: right;
  white-space: nowrap;
}
.pt { padding-right: 5px; }
.cell.head {
  border-right-color: #000;
  border-bottom-color: #000;
  text-align: center;
  padding: 0;
  font: 700 22px/27px "Noto Sans CJK SC", sans-serif;
}
.cell.selected::before {
  content: "";
  position: absolute;
  inset: -1px -2px -2px -2px;
  border: 2px solid #217346;
}
.cell.selected::after {
  content: "";
  position: absolute;
  right: -4px;
  bottom: -4px;
  width: 6px;
  height: 6px;
  background: #217346;
  border: 1px solid #fff;
  border-width: 1px 0 0 1px;
}

.vscroll { flex: 1; display: flex; flex-direction: column; background: #e6e6e6; padding-left: 2px; }
.vbtn {
  height: 24px;
  background: #fff;
  border: 1px solid #c6c6c6;
  border-right: 0;
  display: flex;
  align-items: center;
  justify-content: center;
  margin-top: 1px;
}
.tri-up { width: 0; height: 0; border-left: 4px solid transparent; border-right: 4px solid transparent; border-bottom: 4px solid #888; }
.vthumb { height: 41px; background: #fff; border: 1px solid #c6c6c6; border-right: 0; }
.vtrack { flex: 1; }

.sheetbar {
  height: 33px;
  box-sizing: border-box;
  background: #e6e6e6;
  border-top: 1px solid #9a9a9a;
  border-bottom: 1px solid #c6c6c6;
  display: flex;
  align-items: flex-start;
}
.nav { width: 115px; height: 31px; box-sizing: border-box; padding-left: 28px; display: flex; align-items: center; gap: 25px; }
.tri-l, .tri-r { width: 0; height: 0; border-top: 6px solid transparent; border-bottom: 6px solid transparent; }
.tri-l { border-right: 7px solid #c0c0c0; }
.tri-r { border-left: 7px solid #c0c0c0; }
.tri-l.dark { border-right-color: #666; }
.stab {
  width: 92px;
  height: 29px;
  box-sizing: border-box;
  background: #fff;
  color: #217346;
  border-left: 1px solid #9a9a9a;
  border-right: 1px solid #9a9a9a;
  border-bottom: 3px solid #217346;
  text-align: center;
  font-size: 19px;
  line-height: 23px;
  letter-spacing: .2px;
  white-space: nowrap;
}
.plus { margin: 6px 0 0 40px; }
.hdots { margin: 8px 0 0 878px; display: flex; flex-direction: column; gap: 2px; }
.hdots i { width: 4px; height: 4px; background: #b0b0b0; }
.hscroll {
  margin: 4px 0 0 17px;
  width: 723px;
  height: 24px;
  box-sizing: border-box;
  border: 1px solid #b8b8b8;
  display: flex;
}
.hbtn { width: 24px; display: flex; align-items: center; justify-content: center; background: #fff; flex: none; }
.hthumb { flex: 1; background: #fff; border-left: 2px solid #b8b8b8; border-right: 1px solid #c6c6c6; }

.status { height: 32px; display: flex; align-items: center; background: #f3f3f3; padding-left: 1466px; }
.view { width: 60px; height: 32px; display: flex; align-items: center; justify-content: center; }
.view.on { background: #c6c6c6; }
.minus { width: 11px; height: 2px; background: #555; margin: 0 9px 0 11px; }
.slider { width: 139px; height: 2px; background: #b0b0b0; position: relative; }
.slider i { position: absolute; left: 70px; top: -8px; width: 8px; height: 17px; background: #7a7a7a; }
.zoomv { margin-left: 53px; white-space: nowrap; }
.edge { height: 2px; background: #3c3c3c; }

/* ---- overlays ---- */
.mark { position: absolute; }
.m-two { font: 700 20px "Liberation Serif", serif; }
.m-cap { font: 700 12px "Noto Sans CJK SC", sans-serif; letter-spacing: 3px; opacity: .8; }
.url {
  position: absolute;
  left: 934px;
  top: 987px;
  font: 80px/80px "Liberation Sans", sans-serif;
  color: rgba(0, 0, 220, .72);
  white-space: nowrap;
}
</style>
